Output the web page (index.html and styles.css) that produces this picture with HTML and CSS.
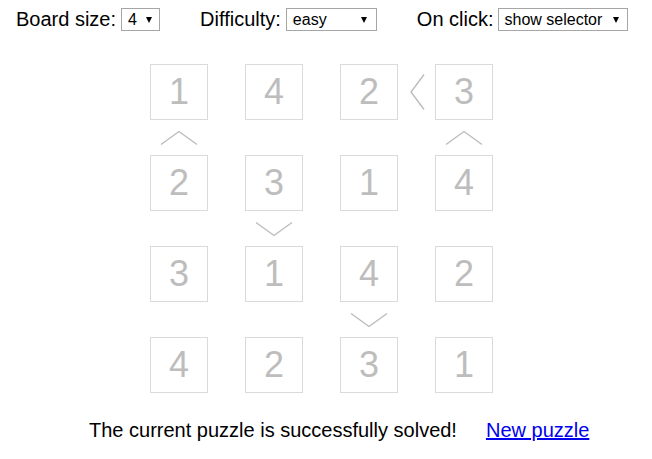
FILE: index.html
```html
<!DOCTYPE html>
<html>
<head>
<meta charset="utf-8">
<title>Futoshiki</title>
<link rel="stylesheet" href="styles.css">
</head>
<body>
<div class="controls">
  <div class="group g-size">Board size:<span class="select w-size"><span>4</span><i class="caret"></i></span></div>
  <div class="group g-diff">Difficulty:<span class="select w-diff"><span>easy</span><i class="caret"></i></span></div>
  <div class="group g-click">On click:<span class="select w-click"><span>show selector</span><i class="caret"></i></span></div>
</div>

<div class="board">
  <div class="cell r0 c0">1</div>
  <div class="cell r0 c1">4</div>
  <div class="cell r0 c2">2</div>
  <div class="cell r0 c3">3</div>
  <div class="arrow r0 gc2"><svg width="16" height="38" viewBox="0 0 16 38"><polyline points="15,1.5 2,19 15,36.5"/></svg></div>
  <div class="arrow gr0 c0"><svg width="38" height="16" viewBox="0 0 38 16"><polyline points="1,14.5 19,1.5 37,14.5"/></svg></div>
  <div class="arrow gr0 c3"><svg width="38" height="16" viewBox="0 0 38 16"><polyline points="1,14.5 19,1.5 37,14.5"/></svg></div>

  <div class="cell r1 c0">2</div>
  <div class="cell r1 c1">3</div>
  <div class="cell r1 c2">1</div>
  <div class="cell r1 c3">4</div>
  <div class="arrow gr1 c1"><svg width="38" height="16" viewBox="0 0 38 16"><polyline points="1,1.5 19,14.5 37,1.5"/></svg></div>

  <div class="cell r2 c0">3</div>
  <div class="cell r2 c1">1</div>
  <div class="cell r2 c2">4</div>
  <div class="cell r2 c3">2</div>
  <div class="arrow gr2 c2"><svg width="38" height="16" viewBox="0 0 38 16"><polyline points="1,1.5 19,14.5 37,1.5"/></svg></div>

  <div class="cell r3 c0">4</div>
  <div class="cell r3 c1">2</div>
  <div class="cell r3 c2">3</div>
  <div class="cell r3 c3">1</div>
</div>

<div class="status">
  <span class="msg">The current puzzle is successfully solved!</span>
  <a href="#" class="newlink">New puzzle</a>
</div>
</body>
</html>
```

FILE: styles.css
```css
html, body {
  margin: 0;
  padding: 0;
  background: #ffffff;
}

body {
  font-family: "Liberation Sans", Arial, sans-serif;
  font-size: 20px;
  color: #000;
}

.controls {
  display: flex;
  align-items: center;
  padding: 8px 0 0 16px;
  height: 23px;
}

.group {
  display: flex;
  align-items: center;
  white-space: nowrap;
}

.g-diff { margin-left: 40px; }
.g-click { margin-left: 40px; }

.select {
  box-sizing: border-box;
  display: inline-flex;
  align-items: center;
  justify-content: space-between;
  height: 23px;
  border: 1px solid #a6a6a6;
  padding: 0 7px 0 6px;
  font-size: 16px;
  background: #fff;
}

.g-size .select { margin-left: 5px; }
.g-diff .select { margin-left: 5px; }
.g-click .select { margin-left: 4px; }

.w-size { width: 39px; }
.w-diff { width: 91px; padding-right: 9px; }
.w-click { width: 130px; padding-right: 8px; }

.caret {
  display: inline-block;
  width: 0;
  height: 0;
  border-left: 3.5px solid transparent;
  border-right: 3.5px solid transparent;
  border-top: 6px solid #000;
  margin-top: 1px;
}

.board {
  display: grid;
  grid-template-columns: 58px 37px 58px 37px 58px 37px 58px;
  grid-template-rows: 56px 35px 56px 35px 56px 35px 56px;
  margin: 33px 0 0 150px;
  width: max-content;
}

.cell {
  box-sizing: border-box;
  border: 1px solid #dadada;
  text-align: center;
  font-size: 36px;
  line-height: 54px;
  color: #bdbdbd;
}

.arrow {
  display: flex;
  align-items: center;
  justify-content: center;
}

.arrow svg polyline {
  fill: none;
  stroke: #bcbcbc;
  stroke-width: 1.4;
}

.r0 { grid-row: 1; }
.gr0 { grid-row: 2; }
.r1 { grid-row: 3; }
.gr1 { grid-row: 4; }
.r2 { grid-row: 5; }
.gr2 { grid-row: 6; }
.r3 { grid-row: 7; }

.c0 { grid-column: 1; }
.gc0 { grid-column: 2; }
.c1 { grid-column: 3; }
.gc1 { grid-column: 4; }
.c2 { grid-column: 5; }
.gc2 { grid-column: 6; }
.c3 { grid-column: 7; }

.status {
  margin-top: 26px;
  padding-left: 89px;
  display: flex;
  align-items: baseline;
  line-height: 23px;
}

.newlink {
  margin-left: 29px;
  color: #0000ee;
  text-decoration: underline;
}
```
